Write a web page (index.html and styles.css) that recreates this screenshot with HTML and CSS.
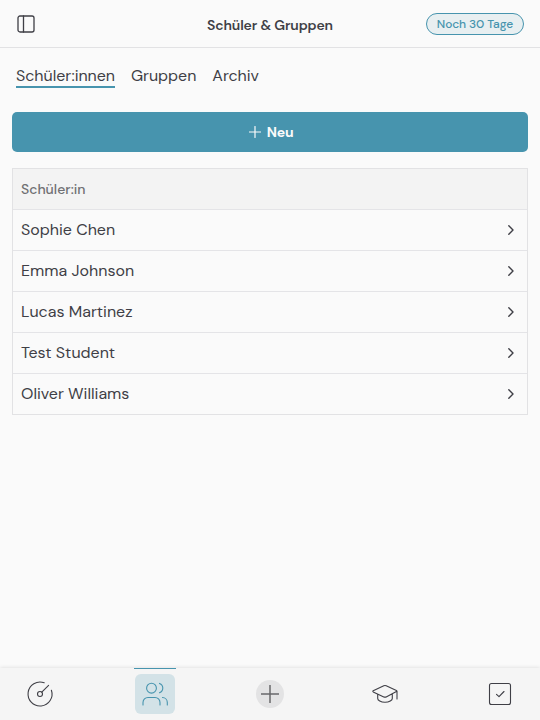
FILE: index.html
```html
<!DOCTYPE html>
<html lang="de">
<head>
<meta charset="utf-8">
<title>Schüler &amp; Gruppen</title>
<link rel="stylesheet" href="styles.css">
</head>
<body>
<header class="topbar">
  <svg class="panel-icon" viewBox="0 0 20 20"><rect x="2" y="2" width="16" height="16" rx="2"/><path d="M7.5 2v16"/></svg>
  <h1>Schüler &amp; Gruppen</h1>
  <div class="trial"><span class="badge">Noch 30 Tage</span></div>
</header>
<main>
  <nav class="tabs"><a class="active">Schüler:innen</a><a>Gruppen</a><a>Archiv</a></nav>
  <button class="new"><svg viewBox="0 0 12 12"><path d="M6 .5v11M.5 6h11"/></svg><span>Neu</span></button>
  <section class="list">
    <div class="row head"><span>Schüler:in</span></div>
    <div class="row"><span>Sophie Chen</span><svg viewBox="0 0 16 16"><path d="M5.8 3.8 10 8l-4.2 4.2"/></svg></div>
    <div class="row"><span>Emma Johnson</span><svg viewBox="0 0 16 16"><path d="M5.8 3.8 10 8l-4.2 4.2"/></svg></div>
    <div class="row"><span>Lucas Martinez</span><svg viewBox="0 0 16 16"><path d="M5.8 3.8 10 8l-4.2 4.2"/></svg></div>
    <div class="row"><span>Test Student</span><svg viewBox="0 0 16 16"><path d="M5.8 3.8 10 8l-4.2 4.2"/></svg></div>
    <div class="row"><span>Oliver Williams</span><svg viewBox="0 0 16 16"><path d="M5.8 3.8 10 8l-4.2 4.2"/></svg></div>
  </section>
</main>
<nav class="bottom">
  <a><svg viewBox="0 0 28 28"><path d="M18.2 2.8A12 12 0 1 0 25.4 10.2M22.6 5.4l-6.8 6.8"/><circle cx="14" cy="14" r="2.5"/></svg></a>
  <a class="current"><svg viewBox="0 0 28 28"><circle cx="10.5" cy="8.2" r="4.9"/><path d="M18.5 3.4a5 5 0 0 1 0 9.4M2 25v-2.5a5 5 0 0 1 5-5h7a5 5 0 0 1 5 5V25M21.5 17.5a5 5 0 0 1 4.8 5V25"/></svg></a>
  <a class="add"><svg viewBox="0 0 28 28"><path d="M14 5v18M5 14h18"/></svg></a>
  <a><svg viewBox="0 0 28 28"><path d="M2.2 10.8 12.8 5.8a3 3 0 0 1 2.4 0l10.2 4.7q.9.5 0 1.1L15.2 16.9a3 3 0 0 1-2.4 0L2.2 11.9q-.8-.6 0-1.1ZM26 11v8M6.7 14.2v4.2c0 1.8 3 3.9 7.3 3.9s7.3-2.1 7.3-3.9v-4.2"/></svg></a>
  <a><svg viewBox="0 0 28 28"><rect x="3.5" y="3.5" width="21" height="21" rx="2"/><path d="m10.5 14.3 2.5 2.4 5-5.2"/></svg></a>
</nav>
</body>
</html>
```
FILE: styles.css
```css
* { box-sizing: border-box; }
body { margin: 0; height: 720px; display: flex; flex-direction: column; overflow: hidden; background: #fafafa; color: #3f3f46; font-family: "DM Sans", Inter, sans-serif; font-size: 16px; }
svg { display: block; fill: none; stroke: currentColor; stroke-linecap: round; stroke-linejoin: round; }
.topbar { height: 48px; flex: none; display: grid; grid-template-columns: 110px 1fr 110px; align-items: center; padding: 0 16px; border-bottom: 1px solid #e2e2e4; }
.panel-icon { width: 20px; height: 20px; stroke-width: 1.3; }
h1 { margin: 3px 0 0; text-align: center; font-size: 14px; line-height: 20px; font-weight: 600; letter-spacing: -.14px; white-space: nowrap; }
.trial { display: flex; justify-content: flex-end; }
.badge { height: 22px; padding: 0 10px; border: 1px solid #4794ae; border-radius: 11px; background: #e8eff1; color: #4794ae; font-size: 12px; line-height: 20px; font-weight: 500; letter-spacing: -.1px; white-space: nowrap; }
main { flex: 1; padding: 16px 12px 0; }
.tabs { height: 24px; display: flex; gap: 16px; padding: 0 4px; line-height: 24px; letter-spacing: -.03px; }
.tabs a { height: 24px; white-space: nowrap; }
.tabs .active { border-bottom: 2px solid #4794ae; }
.new { width: 100%; height: 40px; margin: 24px 0 16px; border: 0; border-radius: 5px; padding: 0 0 0 2px; display: flex; align-items: center; justify-content: center; gap: 6px; background: #4794ae; color: #fafafa; font: 700 14px/20px "DM Sans", Inter, sans-serif; letter-spacing: -.2px; }
.new svg { width: 12px; height: 12px; stroke-width: 1.2; }
.list { border: 1px solid #e2e2e4; }
.row { height: 41px; display: flex; align-items: center; justify-content: space-between; padding: 0 8px; border-bottom: 1px solid #e4e4e7; line-height: 24px; }
.row:last-child { height: 40px; border-bottom: 0; }
.row svg { width: 16px; height: 16px; stroke-width: 1.4; }
.row:not(.head) span { margin-bottom: 1px; }
.head { background: #f3f3f3; color: #707074; font-size: 14px; line-height: 20px; font-weight: 500; }
.bottom { height: 52px; flex: none; display: flex; justify-content: space-between; align-items: center; padding: 0 20px; background: #f5f5f5; box-shadow: 0 0 4px rgba(0,0,0,.14); }
.bottom a { width: 40px; height: 40px; display: grid; place-items: center; border-radius: 6px; }
.bottom svg { width: 28px; height: 28px; stroke-width: 1.1; }
.bottom .current { position: relative; color: #4794ae; background: #d3e2e7; }
.current::before { content: ""; position: absolute; left: -1px; top: -6px; width: 42px; height: 1px; background: #4794ae; }
.bottom .add svg { border-radius: 50%; background: #e3e3e4; color: #68686b; stroke-width: 1.5; stroke-linecap: butt; }
```
